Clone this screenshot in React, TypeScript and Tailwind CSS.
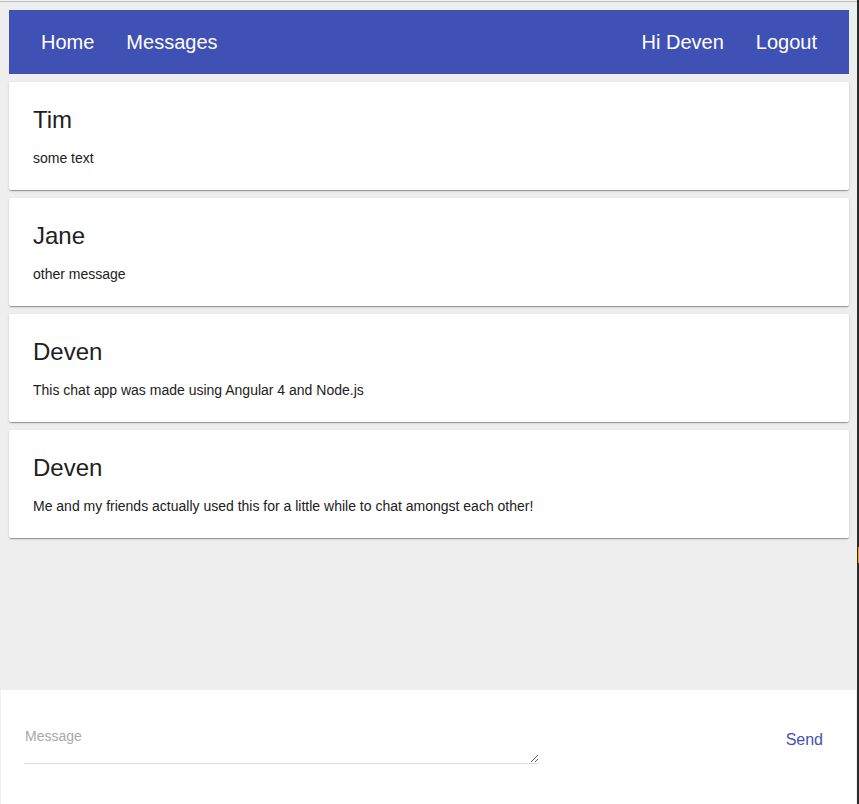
import React from "react";

const messages = [
  { name: "Tim", text: "some text" },
  { name: "Jane", text: "other message" },
  { name: "Deven", text: "This chat app was made using Angular 4 and Node.js" },
  { name: "Deven", text: "Me and my friends actually used this for a little while to chat amongst each other!" },
];

export default function App() {
  return (
    <div
      className="w-[859px] h-[804px] bg-[#eeeeee] flex flex-row overflow-hidden text-[#212121]"
      style={{ fontFamily: '"Liberation Sans", Arial, sans-serif' }}
    >
      <div className="w-[857px] h-full flex flex-col">
        <div className="h-[1px] bg-[#f2f2f2]" />
        <div className="h-[1px] bg-[#bcbcbc]" />
        <div className="flex-1 flex flex-col pl-[9px] pr-[8px] pt-[8px]">
          <nav className="h-[64px] bg-[#3f51b5] flex items-center px-[16px] text-[20px] text-white">
            <span className="px-[16px]">Home</span>
            <span className="px-[16px]">Messages</span>
            <span className="flex-1" />
            <span className="px-[16px]">Hi Deven</span>
            <span className="px-[16px]">Logout</span>
          </nav>
          <div className="flex flex-col gap-[8px] mt-[8px]">
            {messages.map((m, i) => (
              <div
                key={i}
                className="h-[108px] bg-white rounded-[2px] px-[24px] pt-[24px] shadow-[0_2px_1px_-1px_rgba(0,0,0,0.2),0_1px_1px_0_rgba(0,0,0,0.14),0_1px_3px_0_rgba(0,0,0,0.12)]"
              >
                <div className="text-[24px] leading-[28px] mb-[14px]">{m.name}</div>
                <div className="text-[14px] leading-[20px]">{m.text}</div>
              </div>
            ))}
          </div>
        </div>
        <div className="h-[114px] mx-[1px] bg-white flex flex-row pl-[23px] pr-[33px]">
          <textarea
            placeholder="Message"
            className="mt-[36px] w-[515px] h-[38px] pt-[2px] pl-[1px] text-[14px] leading-[16px] outline-none border-b border-[#dddddd] placeholder:text-[#a9a9a9] bg-transparent"
            style={{ fontFamily: '"Liberation Sans", Arial, sans-serif' }}
          />
          <span className="flex-1" />
          <span className="mt-[41px] text-[16px] leading-[18px] text-[#3f51b5] h-[18px]">Send</span>
        </div>
      </div>
      <div className="w-[2px] h-full bg-[#2b2b2b] flex flex-col">
        <div className="h-[547px]" />
        <div className="h-[16px] w-[1px] ml-[1px] bg-[#e0a030]" />
      </div>
    </div>
  );
}
